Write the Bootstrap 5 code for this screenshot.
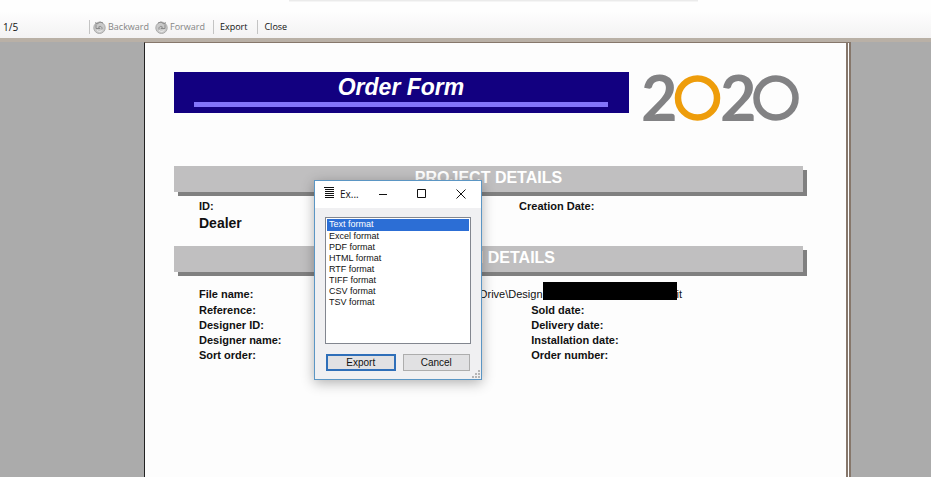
<!DOCTYPE html>
<html lang="en">
<head>
<meta charset="utf-8">
<meta name="viewport" content="width=device-width, initial-scale=1">
<title>Order Form</title>
<link href="https://cdn.jsdelivr.net/npm/bootstrap@5.3.0/dist/css/bootstrap.min.css" rel="stylesheet">
<style>
  body { font-family: "Liberation Sans", Arial, sans-serif; font-size: 11px; line-height: 15px; color: #111; background: #ababab; }
  .toolbar { height: 38px; padding: 0 0 3px 3px; background: linear-gradient(#fefefe 30%, #f3f2f3); font-family: "Open Sans", sans-serif; font-size: 9px; line-height: 16px; }
  .toolbar::before { content: ""; position: absolute; top: 0; left: 31%; right: 25%; height: 2px; background: linear-gradient(#e6e6e6, #fafafa); }
  .page-count { width: 86px; font-size: 10px; }
  .tool { border: 0; padding: 0; background: none; color: #111; gap: 2px; margin-right: 8px; }
  .tool:disabled { color: #858585; gap: 2px; margin-right: 6px; }
  .divider { width: 1px; height: 14px; background: #c4c4c4; margin-right: 3px; }
  .tool + .divider { margin: 0 6px 0 2px; }
  .desk { border-top: 4px solid #b9b0a6; background: #ababab; }
  .paper { margin: 0 80px 0 144px; border: 1px solid #86776b; border-left-color: #222; border-right: 5px double #86776b; border-bottom: 0; background: #fdfdfd; padding: 29px 43px 40px 29px; }
  .masthead { height: 41px; gap: 14px; padding-right: 4px; }
  .banner { background: #120080; height: 41px; padding: 0 21px 5px 20px; }
  .banner h1 { font-size: 23px; line-height: 30px; font-weight: 700; font-style: italic; margin: 0; color: #fff; }
  .banner-rule { height: 5px; background: #8274fa; }
  .brand { overflow: visible; }
  .section-title { height: 26px; font-size: 16px; line-height: 24px; font-weight: 700; color: #fff; background: #c0bfc0; box-shadow: 4px 4px 0 #808080; margin: 0; }
  .project-title { margin-top: 53px; }
  .fields { padding-left: 25px; font-weight: 700; }
  .project-fields { display: grid; grid-template-columns: 53fr 47fr; padding-top: 7px; height: 54px; }
  .design-fields { display: grid; grid-template-columns: 55fr 45fr; padding-top: 1px; }
  .dealer { font-size: 14px; line-height: 18px; }
  .file-row { padding: 15px 121px 0 25px; }
  .redacted { display: inline-block; width: 134px; height: 18px; margin-top: -6px; background: #000; vertical-align: -2px; }
  .file-path { height: 15px; line-height: 15px; }

  .export-window { position: absolute; left: 314px; top: 180px; width: 168px; border: 1px solid #5b96c4; background: #f0f0f2; box-shadow: 0 3px 12px rgba(0,0,0,.3); color: #111; }
  .title-bar { height: 27px; background: #fff; padding: 0 15px 3px 9px; }
  .title-text { font-family: "Open Sans", sans-serif; font-size: 10px; font-weight: 400; line-height: 16px; margin: 0; padding: 2px 0 0 6px; flex: 1; }
  .caption-buttons { gap: 29px; padding-top: 1px; }
  .caption-buttons button { border: 0; background: none; padding: 0; display: flex; }
  .window-body { padding: 9px 10px 8px; }
  .format-list { width: 100%; height: 127px; padding: 1px; border: 1px solid #82868f; border-radius: 0; background: #fff; font-family: "Liberation Sans", Arial, sans-serif; font-size: 9px; overflow: hidden; outline: 0; display: block; color: #111; }
  .format-list option { height: 11px; min-height: 11px; line-height: 11px; padding: 0 2px; }
  .format-list option:checked { background: #2c6ed5 linear-gradient(#2c6ed5, #2c6ed5); color: #fff; }
  .format-list option:first-child { height: 12px; line-height: 12px; }
  .actions { gap: 7px; margin: 10px 1px 0; }
  .push { flex: 1; height: 17px; padding: 0; border: 1px solid #adadad; background: #e1e1e3; font-size: 10px; line-height: 15px; color: #111; }
  .push-default { border: 2px solid #2f6fb9; line-height: 13px; }
  .grip { position: absolute; right: 1px; bottom: 1px; }
</style>
</head>
<body>
<div class="d-flex flex-column min-vh-100 position-relative">
  <header class="toolbar d-flex align-items-end">
    <div class="w-100 d-flex align-items-center">
      <span class="page-count">1/5</span>
      <span class="divider"></span>
      <button class="tool d-flex align-items-center" type="button" disabled>
        <svg width="13" height="13" viewBox="0 0 13 13" aria-hidden="true"><circle cx="6.5" cy="6.8" r="5.7" fill="#c9c9c9" stroke="#aaa"/><path d="M2 1.5l2 1.5 3-2 3 1M3 3.5v4h4L5.500 6c2-1.500 4 0 3.500 2.500" fill="none" stroke="#8a8a8a"/><path d="M4 9.500c2 1.500 4 1 5.500-.5" fill="none" stroke="#eee"/></svg>
        Backward
      </button>
      <button class="tool d-flex align-items-center" type="button" disabled>
        <svg width="13" height="13" viewBox="0 0 13 13" aria-hidden="true"><circle cx="6.5" cy="6.8" r="5.7" fill="#c9c9c9" stroke="#aaa"/><path d="M3 2l3-1 3 2 2-1.500M10 3.500v4H6L7.500 6c-2-1.500-4 0-3.500 2.500" fill="none" stroke="#8a8a8a"/><path d="M4 9.500c2 1.500 4 1 5.500-.5" fill="none" stroke="#eee"/></svg>
        Forward
      </button>
      <span class="divider"></span>
      <button class="tool" type="button">Export</button>
      <span class="divider"></span>
      <button class="tool" type="button">Close</button>
    </div>
  </header>

  <main class="desk d-flex flex-column flex-grow-1">
    <article class="paper flex-grow-1">
      <div class="masthead d-flex">
        <div class="banner flex-grow-1">
          <h1 class="text-center">Order Form</h1>
          <div class="banner-rule"></div>
        </div>
        <svg class="brand" width="156" height="50" viewBox="0 0 156 50" role="img" aria-label="2020" font-family="Lato, sans-serif" font-weight="700" font-size="63" fill="#828284">
          <text x="-2" y="49">2</text>
          <circle cx="54.500" cy="26" r="19.500" fill="none" stroke="#ee9d0b" stroke-width="6.500"/>
          <text x="77" y="49">2</text>
          <circle cx="133" cy="26" r="19.500" fill="none" stroke="#828284" stroke-width="6.500"/>
        </svg>
      </div>

      <h2 class="section-title project-title text-center">PROJECT DETAILS</h2>
      <div class="fields project-fields">
        <div>
          <div>ID:</div>
          <div class="dealer">Dealer</div>
        </div>
        <div>Creation Date:</div>
      </div>

      <h2 class="section-title text-center">DESIGN DETAILS</h2>
      <div class="file-row d-flex justify-content-between">
        <strong>File name:</strong>
        <span class="file-path text-nowrap">Drive\Design<span class="redacted"></span>it</span>
      </div>
      <div class="fields design-fields">
        <div>Reference:</div><div>Sold date:</div>
        <div>Designer ID:</div><div>Delivery date:</div>
        <div>Designer name:</div><div>Installation date:</div>
        <div>Sort order:</div><div>Order number:</div>
      </div>
    </article>
  </main>

  <section class="export-window" role="dialog" aria-labelledby="export-title">
    <div class="title-bar d-flex align-items-center">
      <svg width="10" height="12" viewBox="0 0 10 12" aria-hidden="true"><path d="M0 .5h10M1 2.500h9M1 4.500h9M1 6.500h9M1 8.500h9M1 10.500h9" stroke="#111"/></svg>
      <h2 class="title-text" id="export-title">Ex...</h2>
      <div class="caption-buttons d-flex">
        <button type="button" aria-label="Minimize"><svg width="10" height="10" viewBox="0 0 10 10"><path d="M1 5.500h8" stroke="#111"/></svg></button>
        <button type="button" aria-label="Maximize"><svg width="10" height="10" viewBox="0 0 10 10"><path d="M.5.500h8v8h-8z" fill="none" stroke="#111"/></svg></button>
        <button type="button" aria-label="Close"><svg width="10" height="10" viewBox="0 0 10 10"><path d="M.5.500l9 9M9.500.500l-9 9" stroke="#111"/></svg></button>
      </div>
    </div>
    <div class="window-body">
      <select class="format-list" aria-label="Format" size="8">
        <option selected>Text format</option>
        <option>Excel format</option>
        <option>PDF format</option>
        <option>HTML format</option>
        <option>RTF format</option>
        <option>TIFF format</option>
        <option>CSV format</option>
        <option>TSV format</option>
      </select>
      <div class="actions d-flex">
        <button class="push push-default" type="button">Export</button>
        <button class="push" type="button">Cancel</button>
      </div>
    </div>
    <svg class="grip" width="8" height="8" viewBox="0 0 8 8" fill="#b5b5b5" aria-hidden="true"><path d="M6 0h2v2H6zM3 3h2v2H3zM6 3h2v2H6zM0 6h2v2H0zM3 6h2v2H3zM6 6h2v2H6z"/></svg>
  </section>
</div>
<script src="https://cdn.jsdelivr.net/npm/bootstrap@5.3.0/dist/js/bootstrap.bundle.min.js"></script>
</body>
</html>
